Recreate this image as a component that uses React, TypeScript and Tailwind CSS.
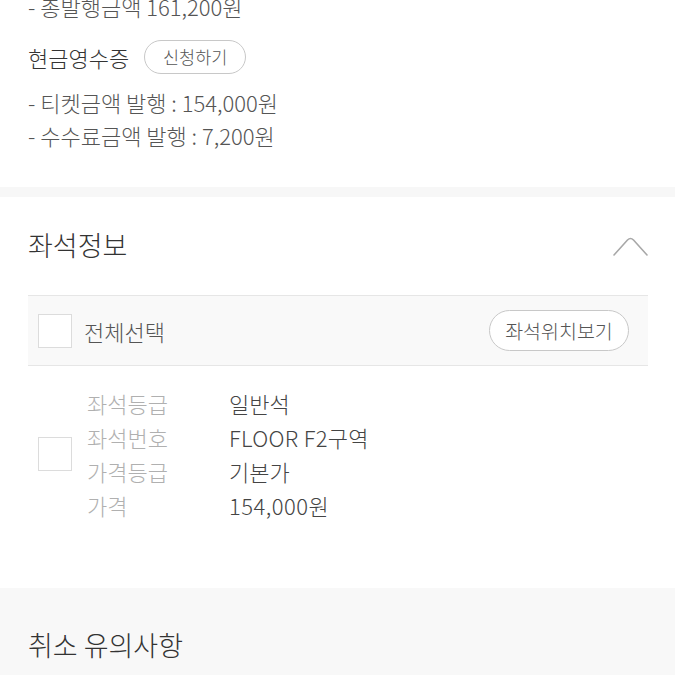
import React from "react";

const font = { fontFamily: '"Noto Sans CJK KR", "Noto Sans", sans-serif' };

function Checkbox() {
  return <div className="w-[34px] h-[34px] border border-[#dcdcdc] bg-white shrink-0" />;
}

export default function App() {
  return (
    <div className="w-[675px] h-[675px] overflow-hidden bg-white text-[#555] font-light" style={font}>
      <div className="px-[28px] pb-[35px]">
        <div className="h-[34px] leading-[34px] mt-[-11px] text-[22px] text-[#555]">- 총발행금액 161,200원</div>
        <div className="flex items-center mt-[17px] h-[34px]">
          <span className="text-[22px] text-[#333] leading-[34px]">현금영수증</span>
          <button className="ml-[15px] h-[34px] w-[102px] rounded-full border border-[#c8c8c8] bg-white text-[17.5px] text-[#555] leading-none">
            신청하기
          </button>
        </div>
        <div className="mt-[12px] text-[22px] leading-[33px] text-[#555]">
          <div>- 티켓금액 발행 : 154,000원</div>
          <div>- 수수료금액 발행 : 7,200원</div>
        </div>
      </div>
      <div className="h-[10px] bg-[#f7f7f7]" />
      <div className="flex items-center justify-between h-[98px] pl-[28px] pr-[27px]">
        <span className="text-[27px] text-[#333] leading-none mt-[-3px]">좌석정보</span>
        <svg width="35" height="20" viewBox="0 0 35 20" fill="none">
          <path d="M1 19 L14.5 4 Q17.5 1 20.5 4 L34 19" stroke="#a8a8a8" strokeWidth="1.6" strokeLinecap="round" strokeLinejoin="round" />
        </svg>
      </div>
      <div className="ml-[28px] mr-[27px] h-[71px] border-t border-b border-[#e6e6e6] bg-[#f9f9f9] flex items-center pl-[10px] pr-[19px]">
        <Checkbox />
        <span className="ml-[12px] text-[22px] text-[#555] leading-none">전체선택</span>
        <button className="ml-auto h-[41px] w-[140px] rounded-full border border-[#c8c8c8] bg-white text-[19.5px] text-[#555] leading-none">
          좌석위치보기
        </button>
      </div>
      <div className="ml-[38px] pt-[20px] pb-[66px] flex items-center">
        <Checkbox />
        <div className="ml-[15px] grid grid-cols-[142px_1fr] text-[22px] leading-[34px]">
          <span className="text-[#b0b0b0]">좌석등급</span>
          <span className="text-[#444]">일반석</span>
          <span className="text-[#b0b0b0]">좌석번호</span>
          <span className="text-[#444] tracking-[0.3px]">FLOOR F2구역</span>
          <span className="text-[#b0b0b0]">가격등급</span>
          <span className="text-[#444]">기본가</span>
          <span className="text-[#b0b0b0]">가격</span>
          <span className="text-[#444] tracking-[0.5px]">154,000원</span>
        </div>
      </div>
      <div className="bg-[#f8f8f8] h-[200px] px-[28px] pt-[40px]">
        <div className="text-[27px] leading-[34px] text-[#333]">취소 유의사항</div>
      </div>
    </div>
  );
}
